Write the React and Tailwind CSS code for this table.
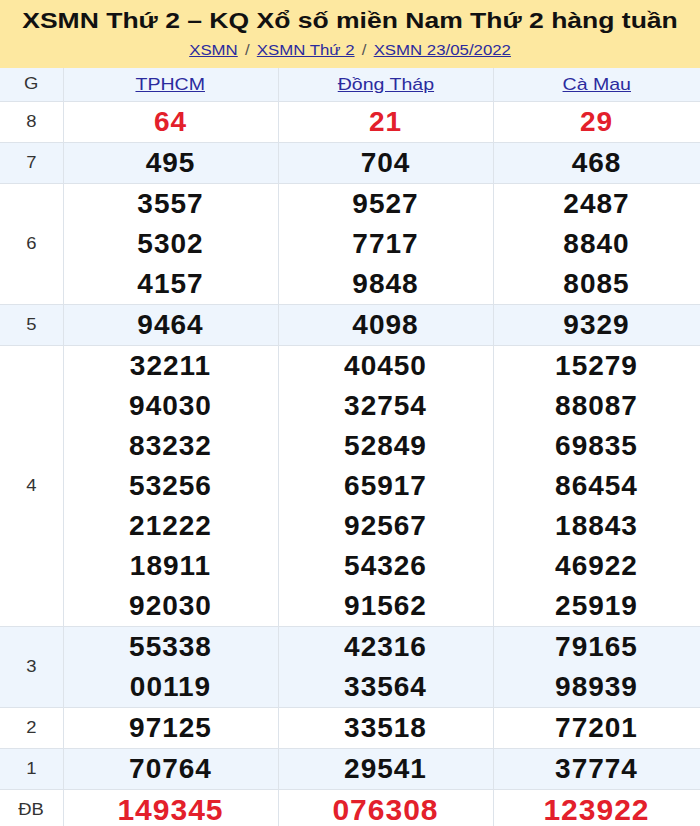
import React from "react";

const rows = [
  { g: "8", bg: false, red: true, big: false, cols: [["64"], ["21"], ["29"]] },
  { g: "7", bg: true, cols: [["495"], ["704"], ["468"]] },
  { g: "6", bg: false, cols: [["3557", "5302", "4157"], ["9527", "7717", "9848"], ["2487", "8840", "8085"]] },
  { g: "5", bg: true, cols: [["9464"], ["4098"], ["9329"]] },
  {
    g: "4",
    bg: false,
    cols: [
      ["32211", "94030", "83232", "53256", "21222", "18911", "92030"],
      ["40450", "32754", "52849", "65917", "92567", "54326", "91562"],
      ["15279", "88087", "69835", "86454", "18843", "46922", "25919"],
    ],
  },
  { g: "3", bg: true, cols: [["55338", "00119"], ["42316", "33564"], ["79165", "98939"]] },
  { g: "2", bg: false, cols: [["97125"], ["33518"], ["77201"]] },
  { g: "1", bg: true, cols: [["70764"], ["29541"], ["37774"]] },
  { g: "ĐB", bg: false, red: true, big: true, cols: [["149345"], ["076308"], ["123922"]] },
];

export default function App() {
  return (
    <div className="w-[700px] h-[826px] overflow-hidden bg-white" style={{ fontFamily: '"Liberation Sans", Arial, sans-serif' }}>
      <div className="h-[68px] bg-[#fde8a0] flex flex-col items-center">
        <h1 className="mt-[7px] text-[22px] leading-[28px] font-bold text-[#111] scale-x-[1.205] whitespace-nowrap">
          XSMN Thứ 2 – KQ Xổ số miền Nam Thứ 2 hàng tuần
        </h1>
        <div className="mt-[6px] text-[14px] leading-[18px] text-[#555] scale-x-[1.2] whitespace-nowrap">
          <a className="underline text-[#2b2b9e]">XSMN</a>
          <span className="mx-[6px]">/</span>
          <a className="underline text-[#2b2b9e]">XSMN Thứ 2</a>
          <span className="mx-[6px]">/</span>
          <a className="underline text-[#2b2b9e]">XSMN 23/05/2022</a>
        </div>
      </div>
      <table className="w-[700px] border-collapse table-fixed">
        <colgroup>
          <col className="w-[63px]" />
          <col className="w-[215px]" />
          <col className="w-[215px]" />
          <col className="w-[207px]" />
        </colgroup>
        <thead>
          <tr className="bg-[#eef5fd] h-[33px]">
            <th className="border-r border-b border-[#dde3ea] font-normal text-[16px] text-[#333] text-center">
              <span className="inline-block scale-x-[1.15]">G</span>
            </th>
            {["TPHCM", "Đồng Tháp", "Cà Mau"].map((n) => (
              <th key={n} className="border-r border-b border-[#dde3ea] font-normal text-[17px] text-center">
                <a className="inline-block underline text-[#2b2b9e] scale-x-[1.15]">{n}</a>
              </th>
            ))}
          </tr>
        </thead>
        <tbody>
          {rows.map((r) => (
            <tr key={r.g} className={r.bg ? "bg-[#eef5fd]" : "bg-white"}>
              <td className="border-r border-b border-[#dde3ea] text-center text-[16px] text-[#333] align-middle">
                <span className="inline-block scale-x-[1.15]">{r.g}</span>
              </td>
              {r.cols.map((c, i) => (
                <td key={i} className="border-r border-b border-[#dde3ea] text-center align-middle p-0">
                  {c.map((n, j) => (
                    <div
                      key={j}
                      className={
                        "h-[40px] leading-[40px] font-bold tracking-[1px] " +
                        (r.red ? "text-[#e3202b] " : "text-[#111] ") +
                        (r.big ? "text-[30px]" : "text-[28px]")
                      }
                    >
                      {n}
                    </div>
                  ))}
                </td>
              ))}
            </tr>
          ))}
        </tbody>
      </table>
    </div>
  );
}
